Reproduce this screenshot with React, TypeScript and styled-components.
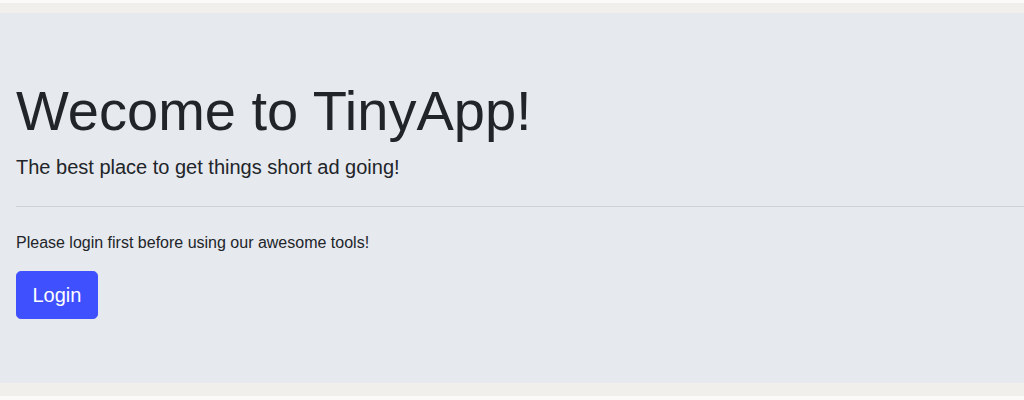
import React from "react";
import styled, { createGlobalStyle } from "styled-components";

const Global = createGlobalStyle`
  html, body { margin: 0; padding: 0; background: #fbfaf8; }
  body {
    font-family: "Liberation Sans", Arial, sans-serif;
    color: #212529;
    -webkit-font-smoothing: antialiased;
  }
  * { box-sizing: border-box; }
`;

const Page = styled.div`
  margin-top: 3px;
  background: #f1efec;
  padding: 10px 0 13px;
`;

const Jumbotron = styled.section`
  background: #e6e9ee;
  padding: 64px 16px;
`;

const Title = styled.h1`
  margin: 0 0 8px;
  font-size: 56px;
  font-weight: 400;
  line-height: 1.2;
  color: #212529;
`;

const Lead = styled.p`
  margin: 0;
  font-size: 20px;
  line-height: 30px;
  color: #212529;
`;

const Rule = styled.hr`
  margin: 24px -16px 24px 0;
  border: 0;
  border-top: 1px solid rgba(0, 0, 0, 0.1);
`;

const Text = styled.p`
  margin: 0 0 16px;
  font-size: 16px;
  line-height: 24px;
  color: #212529;
`;

const Button = styled.a`
  display: inline-block;
  padding: 8px 15.5px;
  font-size: 20px;
  line-height: 30px;
  color: #fff;
  background: #3f51ff;
  border: 1px solid #3f51ff;
  border-radius: 4.8px;
  text-decoration: none;
  cursor: pointer;
`;

const ButtonRow = styled.div`
  display: flex;
`;

export default function App() {
  return (
    <>
      <Global />
      <Page>
        <Jumbotron>
          <Title>Wecome to TinyApp!</Title>
          <Lead>The best place to get things short ad going!</Lead>
          <Rule />
          <Text>Please login first before using our awesome tools!</Text>
          <ButtonRow>
            <Button href="#">Login</Button>
          </ButtonRow>
        </Jumbotron>
      </Page>
    </>
  );
}
